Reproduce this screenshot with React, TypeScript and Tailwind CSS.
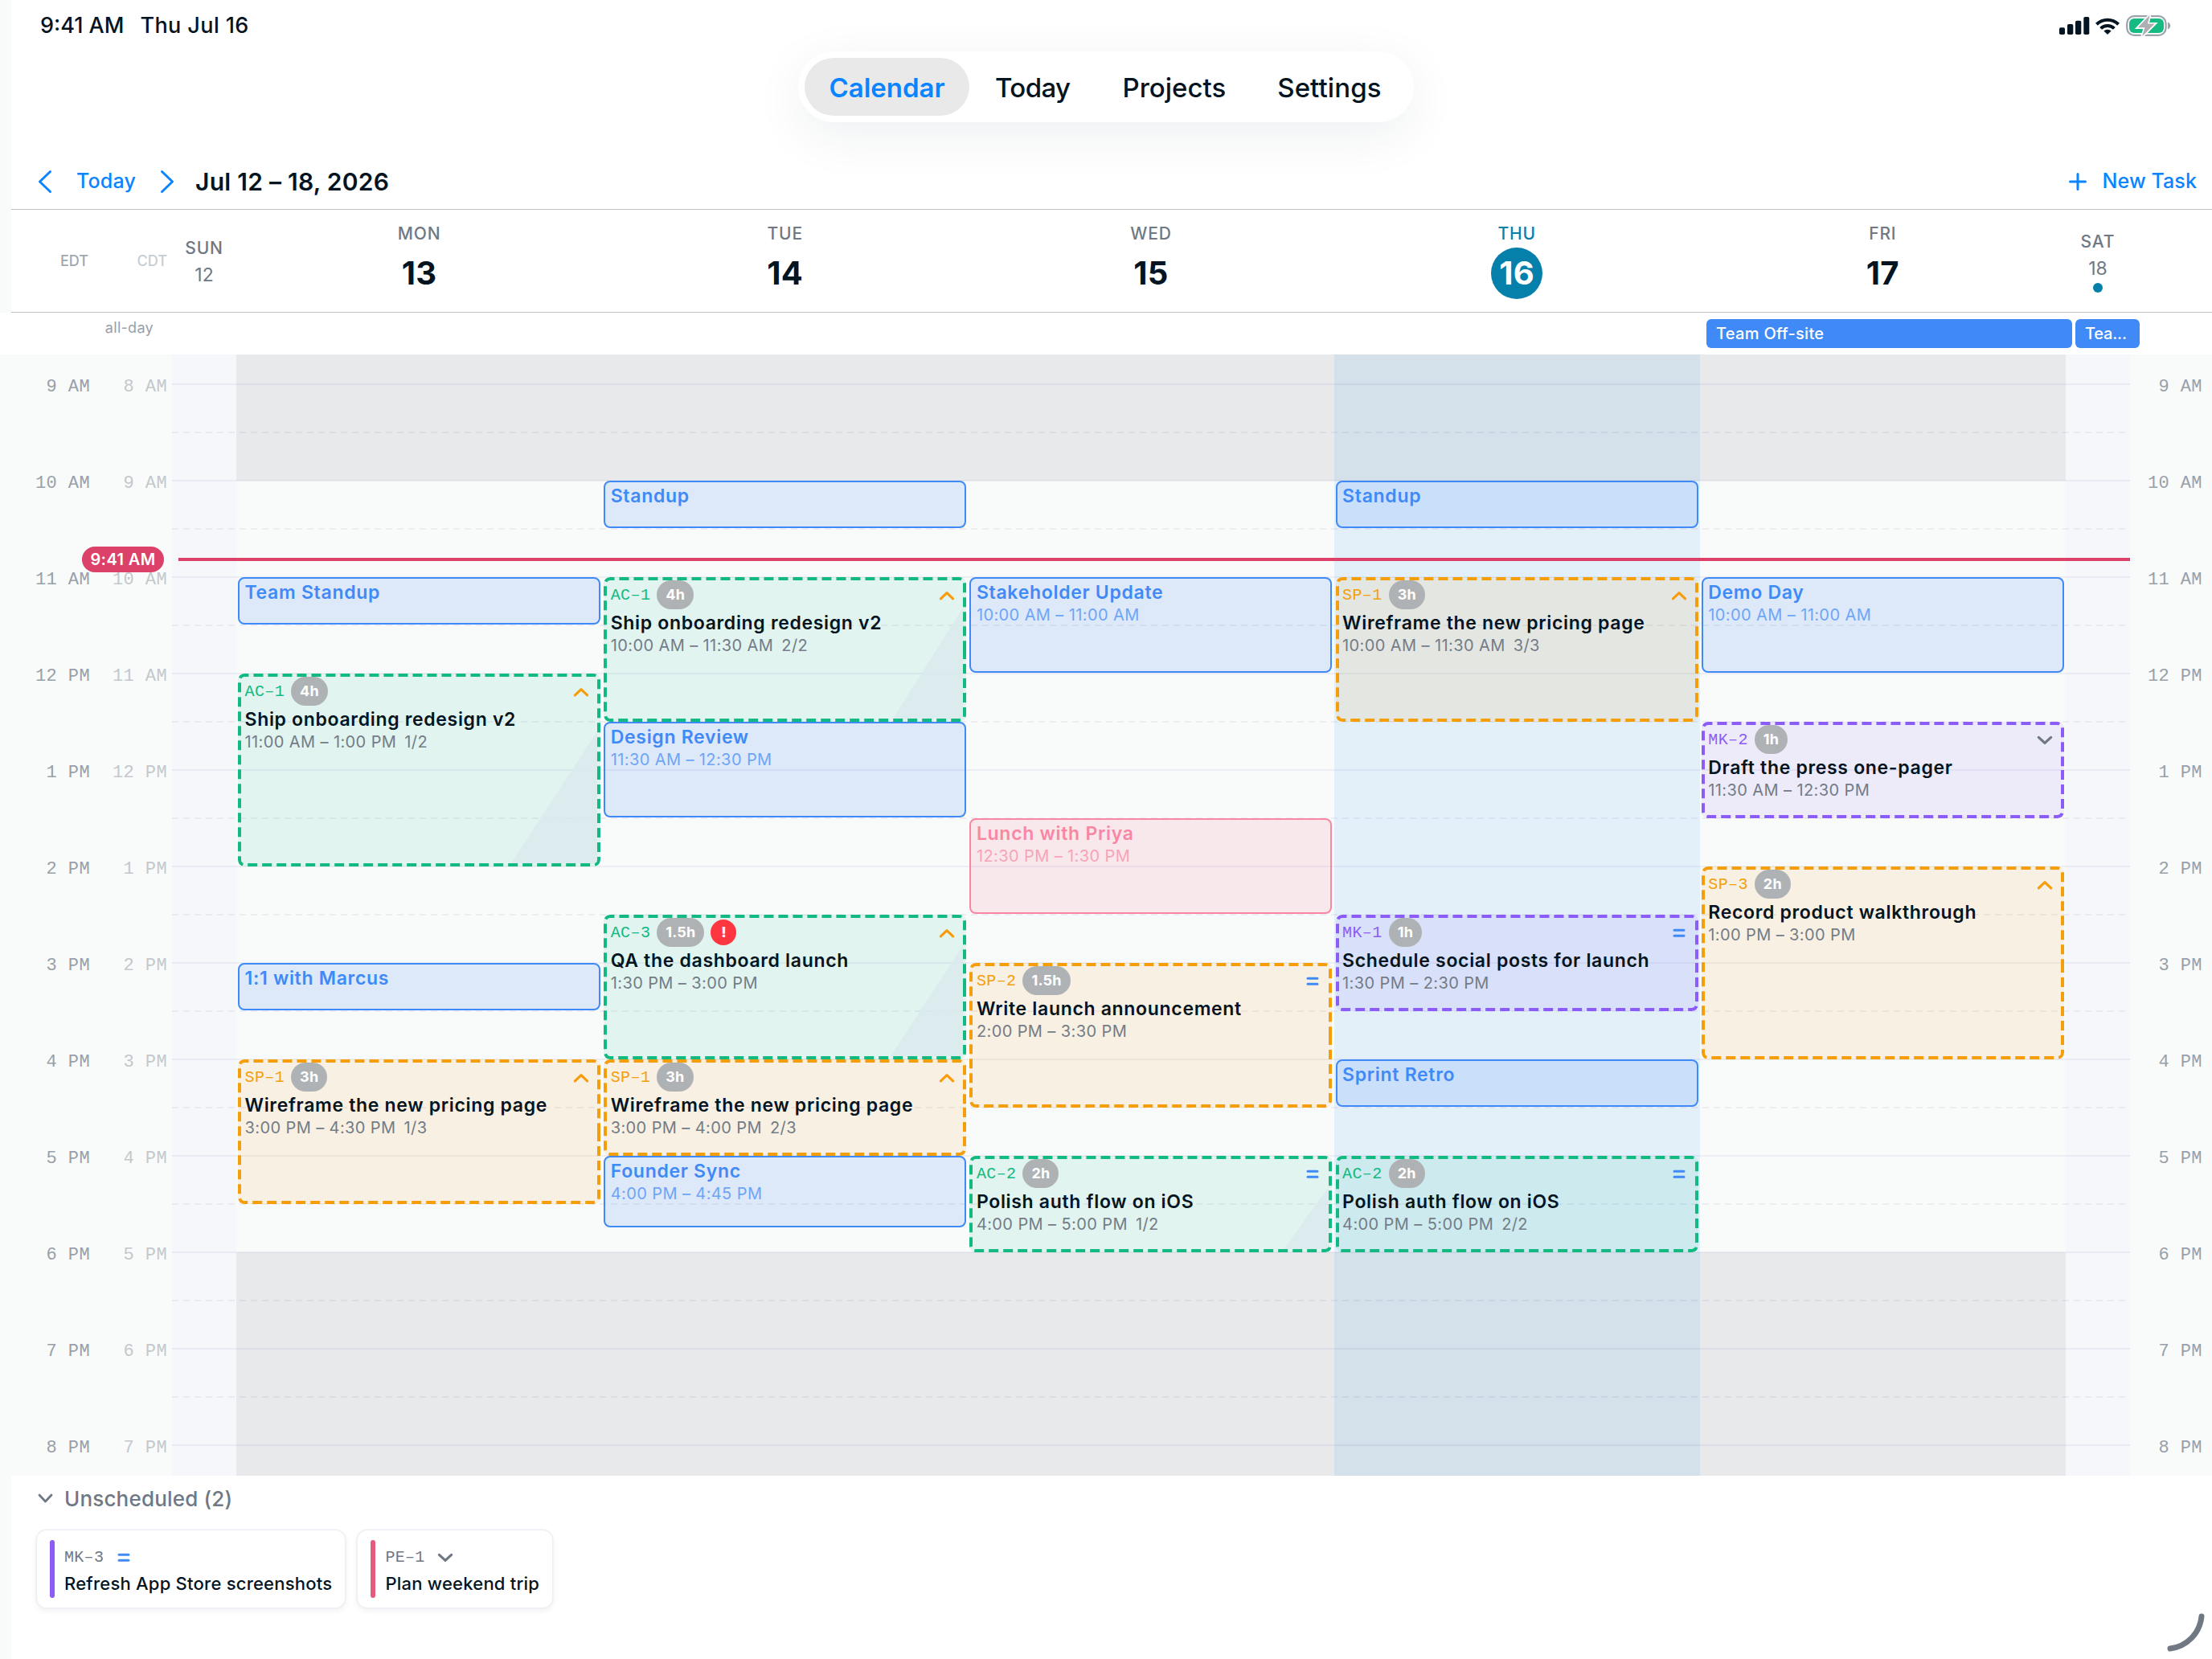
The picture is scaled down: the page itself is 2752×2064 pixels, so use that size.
import clsx from "clsx";

type Color = "blue" | "pink" | "green" | "orange" | "purple";
type Priority = "high" | "medium" | "low";

type CalendarEvent = {
  kind: "event";
  title: string;
  color: Color;
  start: number;
  end: number;
  time?: string;
};

type Task = {
  kind: "task";
  id: string;
  title: string;
  color: Color;
  start: number;
  end: number;
  time: string;
  part?: string;
  estimate: string;
  priority: Priority;
  overdue?: boolean;
  corner?: [number, number];
};

type Day = {
  name: string;
  date: number;
  today?: boolean;
  items: (CalendarEvent | Task)[];
};

const FIRST_HOUR = 9;

// start/end are hours on the EDT axis, labels are in the local zone
const days: Day[] = [
  {
    name: "MON",
    date: 13,
    items: [
      { kind: "event", title: "Team Standup", color: "blue", start: 11, end: 11.5 },
      { kind: "task", id: "AC–1", title: "Ship onboarding redesign v2", color: "green", start: 12, end: 14, time: "11:00 AM – 1:00 PM", part: "1/2", estimate: "4h", priority: "high", corner: [107, 164] },
      { kind: "event", title: "1:1 with Marcus", color: "blue", start: 15, end: 15.5 },
      { kind: "task", id: "SP–1", title: "Wireframe the new pricing page", color: "orange", start: 16, end: 17.5, time: "3:00 PM – 4:30 PM", part: "1/3", estimate: "3h", priority: "high" },
    ],
  },
  {
    name: "TUE",
    date: 14,
    items: [
      { kind: "event", title: "Standup", color: "blue", start: 10, end: 10.5 },
      { kind: "task", id: "AC–1", title: "Ship onboarding redesign v2", color: "green", start: 11, end: 12.5, time: "10:00 AM – 11:30 AM", part: "2/2", estimate: "4h", priority: "high", corner: [87, 138] },
      { kind: "event", title: "Design Review", color: "blue", start: 12.5, end: 13.5, time: "11:30 AM – 12:30 PM" },
      { kind: "task", id: "AC–3", title: "QA the dashboard launch", color: "green", start: 14.5, end: 16, time: "1:30 PM – 3:00 PM", estimate: "1.5h", priority: "high", overdue: true, corner: [90, 138] },
      { kind: "task", id: "SP–1", title: "Wireframe the new pricing page", color: "orange", start: 16, end: 17, time: "3:00 PM – 4:00 PM", part: "2/3", estimate: "3h", priority: "high" },
      { kind: "event", title: "Founder Sync", color: "blue", start: 17, end: 17.75, time: "4:00 PM – 4:45 PM" },
    ],
  },
  {
    name: "WED",
    date: 15,
    items: [
      { kind: "event", title: "Stakeholder Update", color: "blue", start: 11, end: 12, time: "10:00 AM – 11:00 AM" },
      { kind: "event", title: "Lunch with Priya", color: "pink", start: 13.5, end: 14.5, time: "12:30 PM – 1:30 PM" },
      { kind: "task", id: "SP–2", title: "Write launch announcement", color: "orange", start: 15, end: 16.5, time: "2:00 PM – 3:30 PM", estimate: "1.5h", priority: "medium" },
      { kind: "task", id: "AC–2", title: "Polish auth flow on iOS", color: "green", start: 17, end: 18, time: "4:00 PM – 5:00 PM", part: "1/2", estimate: "2h", priority: "medium", corner: [56, 78] },
    ],
  },
  {
    name: "THU",
    date: 16,
    today: true,
    items: [
      { kind: "event", title: "Standup", color: "blue", start: 10, end: 10.5 },
      { kind: "task", id: "SP–1", title: "Wireframe the new pricing page", color: "orange", start: 11, end: 12.5, time: "10:00 AM – 11:30 AM", part: "3/3", estimate: "3h", priority: "high" },
      { kind: "task", id: "MK–1", title: "Schedule social posts for launch", color: "purple", start: 14.5, end: 15.5, time: "1:30 PM – 2:30 PM", estimate: "1h", priority: "medium" },
      { kind: "event", title: "Sprint Retro", color: "blue", start: 16, end: 16.5 },
      { kind: "task", id: "AC–2", title: "Polish auth flow on iOS", color: "green", start: 17, end: 18, time: "4:00 PM – 5:00 PM", part: "2/2", estimate: "2h", priority: "medium" },
    ],
  },
  {
    name: "FRI",
    date: 17,
    items: [
      { kind: "event", title: "Demo Day", color: "blue", start: 11, end: 12, time: "10:00 AM – 11:00 AM" },
      { kind: "task", id: "MK–2", title: "Draft the press one-pager", color: "purple", start: 12.5, end: 13.5, time: "11:30 AM – 12:30 PM", estimate: "1h", priority: "low" },
      { kind: "task", id: "SP–3", title: "Record product walkthrough", color: "orange", start: 14, end: 16, time: "1:00 PM – 3:00 PM", estimate: "2h", priority: "high" },
    ],
  },
];

const edtHours = ["9 AM", "10 AM", "11 AM", "12 PM", "1 PM", "2 PM", "3 PM", "4 PM", "5 PM", "6 PM", "7 PM", "8 PM"];
const cdtHours = ["8 AM", "9 AM", "10 AM", "11 AM", "12 PM", "1 PM", "2 PM", "3 PM", "4 PM", "5 PM", "6 PM", "7 PM"];

const eventStyles: Record<Color, string> = {
  blue: "border-[#3f8af6] bg-[#3b82f6]/15 text-[#3f8af6]",
  pink: "border-[#f887a3] bg-[#f43f6e]/10 text-[#f887a3]",
  green: "",
  orange: "",
  purple: "",
};

const taskStyles: Record<Color, string> = {
  green: "bg-[#10b995]/10 text-[#12b981]",
  orange: "bg-[#f5920f]/10 text-[#f59e0b]",
  purple: "bg-[#8b5cf6]/10 text-[#8b5cf6]",
  blue: "",
  pink: "",
};

function PriorityIcon({ priority }: { priority: Priority }) {
  if (priority === "medium") {
    return (
      <svg width="20" height="14" viewBox="0 0 20 14" fill="none" stroke="#3f8af6" strokeWidth="3" strokeLinecap="round">
        <path d="M4 3.2h12M4 10.2h12" />
      </svg>
    );
  }
  return (
    <svg width="20" height="14" viewBox="0 0 20 14" fill="none" strokeWidth="3.2" strokeLinecap="round" strokeLinejoin="round" stroke={priority === "high" ? "#f99c0c" : "#6f7883"}>
      <path d={priority === "high" ? "M2.4 10.8 10 3.6l7.6 7.2" : "M2.4 3.4 10 10.4l7.6-7"} />
    </svg>
  );
}

// dashed outline that starts at the middle of the right edge
function DashedOutline({ hours }: { hours: number }) {
  const w = 451;
  const h = hours * 120;
  const d = `M${w - 2} ${h / 2}V${h - 8}a6 6 0 0 1-6 6H8a6 6 0 0 1-6-6V8a6 6 0 0 1 6-6H${w - 8}a6 6 0 0 1 6 6Z`;
  return (
    <svg className="absolute inset-0" width={w} height={h} fill="none" stroke="currentColor" strokeWidth="4" strokeDasharray="12 6">
      <path d={d} />
    </svg>
  );
}

function EventCard({ item }: { item: CalendarEvent }) {
  return (
    <div
      className={clsx("mb-px ml-[2px] w-[451px] overflow-hidden rounded-lg border-2 pt-1 pl-[6.5px] whitespace-nowrap", eventStyles[item.color])}
      style={{ gridRow: `${(item.start - FIRST_HOUR) * 4 + 1} / ${(item.end - FIRST_HOUR) * 4 + 1}` }}
    >
      <div className="text-[23px] leading-[26px] font-semibold tracking-[0.7px]">{item.title}</div>
      {item.time && <div className="mt-[3px] text-xl leading-6 tracking-[0.4px] opacity-70">{item.time}</div>}
    </div>
  );
}

function TaskCard({ item }: { item: Task }) {
  return (
    <div
      className={clsx("relative ml-[2px] w-[451px] overflow-hidden rounded-lg pt-1 pr-[14px] pl-[8.5px] whitespace-nowrap", taskStyles[item.color])}
      style={{ gridRow: `${(item.start - FIRST_HOUR) * 4 + 1} / ${(item.end - FIRST_HOUR) * 4 + 1}` }}
    >
      {item.corner && (
        <div
          className="absolute right-1 bottom-1 bg-[#dbe8ee]/80 [clip-path:polygon(100%_0,100%_100%,0_100%)]"
          style={{ width: item.corner[0], height: item.corner[1] }}
        />
      )}
      <DashedOutline hours={item.end - item.start} />
      <div className="relative flex h-9 items-center gap-2">
        <span className="mt-px font-['Liberation_Mono',monospace] text-xl leading-6 tracking-[0.4px]">{item.id}</span>
        <span className="flex h-9 items-center rounded-full bg-[#afb2b5] px-[11px] text-lg font-bold tracking-[0.2px] text-white">{item.estimate}</span>
        {item.overdue && (
          <span className="flex size-8 items-center justify-center rounded-full bg-[#fd363f] text-lg font-extrabold text-white">!</span>
        )}
        <span className="mt-px ml-auto">
          <PriorityIcon priority={item.priority} />
        </span>
      </div>
      <div className="relative mt-1 text-[23px] leading-[26px] font-semibold tracking-[0.68px] text-[#041421]">{item.title}</div>
      <div className="relative mt-[3px] flex gap-[10px] text-xl leading-6 tracking-[0.4px] text-[#737c87]">
        <span>{item.time}</span>
        {item.part && <span>{item.part}</span>}
      </div>
    </div>
  );
}

function StatusBar() {
  return (
    <div className="flex h-16 items-center pr-[51px] pl-[36px] text-[27px] font-medium">
      <span className="mt-px">9:41 AM</span>
      <span className="mt-px ml-[20px] tracking-[0.4px]">Thu Jul 16</span>
      <svg className="ml-auto" width="38" height="22" viewBox="0 0 38 22" fill="#041421">
        <rect x="0" y="13.3" width="7" height="8.7" rx="1.8" />
        <rect x="10" y="9" width="7.3" height="13" rx="1.8" />
        <rect x="20" y="4.7" width="7.3" height="17.3" rx="1.8" />
        <rect x="30.3" y="0" width="7" height="22" rx="1.8" />
      </svg>
      <svg className="ml-[7px]" width="30" height="21" viewBox="0 0 30 21" fill="none" stroke="#041421" strokeWidth="4">
        <path d="M1.4 8.2a19.4 19.4 0 0 1 27.2 0" />
        <path d="M6.6 13.4a11.9 11.9 0 0 1 16.8 0" />
        <path d="M10.4 16.6a6.6 6.6 0 0 1 9.2 0L15 21Z" fill="#041421" stroke="none" />
      </svg>
      <svg className="ml-[8px]" width="56" height="30" viewBox="0 0 56 30" fill="none">
        <rect x="1.2" y="3.2" width="48.4" height="23.6" rx="9" stroke="#9ba3ab" strokeWidth="2.2" />
        <path d="M52 10.4c2 .8 3.2 2.5 3.2 4.6s-1.2 3.8-3.2 4.6Z" fill="#9ba3ab" />
        <rect x="4" y="6" width="43" height="18" rx="6" fill="#15bb83" />
        <path d="M29.7 1.6 14.8 17.3h8.7L20 28.6l15.7-16h-8.8Z" fill="#adafb3" stroke="#fff" strokeWidth="3.4" paintOrder="stroke" />
      </svg>
    </div>
  );
}

function NavPill() {
  return (
    <div className="ml-[-14px] flex justify-center">
      <nav className="flex h-[88px] w-[766px] items-center rounded-full bg-white px-2 text-[33px] leading-10 font-medium shadow-[0_16px_64px_rgba(20,40,50,0.07)]">
        <span className="flex h-[72px] w-[205px] items-center justify-center rounded-full bg-[#e9e9ea] pt-px font-semibold text-[#0a84ff]">Calendar</span>
        <span className="mt-px ml-[32px] tracking-[-0.6px]">Today</span>
        <span className="mt-px ml-[65px]">Projects</span>
        <span className="mt-px ml-[64px] tracking-[0.1px]">Settings</span>
      </nav>
    </div>
  );
}

function Toolbar() {
  return (
    <div className="mt-[40px] flex h-[68px] items-center pr-[19px] pl-[32px] text-[25px] font-medium text-[#0a84ff]">
      <svg width="20" height="30" viewBox="0 0 20 30" fill="none" stroke="currentColor" strokeWidth="3" strokeLinecap="round" strokeLinejoin="round">
        <path d="M16.5 2.5 3.5 15l13 12.5" />
      </svg>
      <span className="ml-[29px] tracking-[0.2px]">Today</span>
      <svg className="ml-[29px]" width="20" height="30" viewBox="0 0 20 30" fill="none" stroke="currentColor" strokeWidth="3" strokeLinecap="round" strokeLinejoin="round">
        <path d="m3.5 2.5 13 12.500-13 12.500" />
      </svg>
      <span className="mt-px ml-[25px] text-[30px] font-semibold tracking-[0.25px] text-[#041421]">Jul 12 – 18, 2026</span>
      <svg className="ml-auto" width="22" height="22" viewBox="0 0 22 22" fill="none" stroke="currentColor" strokeWidth="3" strokeLinecap="round">
        <path d="M11 1.5v19M1.5 11h19" />
      </svg>
      <span className="ml-[20px] tracking-[0.1px]">New Task</span>
    </div>
  );
}

function WeekHeader() {
  return (
    <div className="grid h-[129px] grid-cols-[200px_80px_repeat(5,455.2px)_80px_102px] border-y border-[#b9c1c6] text-[#6f7883]">
      <div className="flex items-center pt-px text-right text-lg font-medium">
        <span className="w-[96px] text-[#a0a8b0]">EDT</span>
        <span className="w-[98px] text-[#c8cdd1]">CDT</span>
      </div>
      <div className="flex flex-col items-center justify-center gap-[5px] pt-px text-[21px] leading-7 font-medium">
        <span className="tracking-[0.8px]">SUN</span>
        <span className="text-[23px] font-normal">12</span>
      </div>
      {days.map((day) => (
        <div key={day.name} className="flex flex-col items-center justify-center gap-[5px]">
          <span className={clsx("relative top-px text-[21px] leading-[26px] font-medium tracking-[0.8px]", day.today && "text-[#0480aa]")}>{day.name}</span>
          <span className={clsx("flex size-16 items-center justify-center rounded-full text-[40px] font-bold tracking-[0.3px]", day.today ? "bg-[#0480aa] text-white" : "text-[#041421]")}>
            {day.date}
          </span>
        </div>
      ))}
      <div className="flex flex-col items-center justify-center pt-px text-[21px] leading-7 font-medium">
        <span className="tracking-[0.8px]">SAT</span>
        <span className="mt-[5px] text-[23px] font-normal">18</span>
        <span className="mt-1 size-3 rounded-full bg-[#0480aa]" />
      </div>
    </div>
  );
}

function AllDayRow() {
  return (
    <div className="flex h-[52px] shrink-0 pt-2 text-xl">
      <span className="w-[191px] text-right text-lg leading-[22px] tracking-[0.3px] text-[#98a1aa]">all-day</span>
      <div className="ml-[1932px] flex gap-1 font-medium tracking-[0.3px] text-white">
        <div className="h-9 w-[455px] rounded-md bg-[#3f8af6] pl-[12px] leading-[37px]">Team Off-site</div>
        <div className="h-9 w-20 rounded-md bg-[#3f8af6] pl-[12px] leading-[37px] tracking-[-0.2px]">Tea...</div>
      </div>
    </div>
  );
}

function HourLabels({ hours, className }: { hours: string[]; className: string }) {
  return (
    <div className={clsx("-mt-[19px] flex flex-col text-right font-['Liberation_Mono',monospace] text-[22px] tracking-[0.4px]", className)}>
      {hours.map((hour) => (
        <span key={hour} className="h-[120px] shrink-0 leading-[120px] whitespace-pre">{hour}</span>
      ))}
    </div>
  );
}

function GridLines() {
  return (
    <div className="absolute top-[36px] right-[102px] left-[214px]">
      {edtHours.map((hour) => (
        <div key={hour} className="h-[120px]">
          <div className="h-[2px] bg-[#5a5aa0]/8" />
          <div className="mt-[58px] h-[2px] bg-[repeating-linear-gradient(to_right,#5a5aa016_0_8px,transparent_8px_14px)]" />
        </div>
      ))}
    </div>
  );
}

function WeekGrid() {
  return (
    <div className="relative flex h-[1395px] shrink-0 overflow-hidden bg-[#f9fbfa]">
      <HourLabels hours={edtHours} className="w-[112px] text-[#98a0a9]" />
      <HourLabels hours={cdtHours} className="mr-[6px] w-[96px] text-[#c3c8cd]" />
      <div className="w-20 bg-[#f6f7fa]" />
      {days.map((day) => (
        <div key={day.name} className={clsx("flex w-[455.2px] flex-col", day.today && "bg-[#e3f0fa]")}>
          <div className={clsx("h-[157px]", day.today ? "bg-[#d4e0ea]" : "bg-[#e8e9eb]")} />
          <div className="h-[960px]" />
          <div className={clsx("flex-1", day.today ? "bg-[#d4e0ea]" : "bg-[#e8e9eb]")} />
        </div>
      ))}
      <div className="w-20 bg-[#f6f7fa]" />
      <HourLabels hours={edtHours} className="w-[90px] text-[#98a0a9]" />
      <GridLines />
      {/* events lie over the shaded columns and hour lines */}
      <div className="absolute top-[37px] left-[294px] flex">
        {days.map((day) => (
          <div key={day.name} className="grid w-[455.2px] auto-rows-[30px]">
            {day.items.map((item) =>
              item.kind === "event" ? <EventCard key={item.title} item={item} /> : <TaskCard key={item.id} item={item} />,
            )}
          </div>
        ))}
      </div>
      <div className="absolute top-[239px] right-[102px] left-[102px] flex items-center">
        <span className="flex h-8 w-[102px] items-center justify-center rounded-full bg-[#dc4169] text-xl font-semibold tracking-[0.4px] text-white">9:41 AM</span>
        <span className="ml-[18px] h-1 flex-1 bg-[#dc4169]" />
      </div>
    </div>
  );
}

function UnscheduledCard({ id, title, priority, barClass }: { id: string; title: string; priority: Priority; barClass: string }) {
  return (
    <div className="flex h-24 gap-3 rounded-xl bg-white py-3 pr-4 pl-4 shadow-[0_0_0_1.5px_#eeeef5,0_3px_8px_rgba(20,30,60,0.08)]">
      <span className={clsx("w-1.5 rounded-full", barClass)} />
      <div className="flex flex-col pt-[10px]">
        <div className="flex h-6 items-center gap-[15px] font-['Liberation_Mono',monospace] text-xl tracking-[0.3px] text-[#6f7883]">
          {id}
          <PriorityIcon priority={priority} />
        </div>
        <div className="mt-[7px] text-[22px] leading-[26px] font-medium tracking-[0.23px] whitespace-nowrap">{title}</div>
      </div>
    </div>
  );
}

export default function App() {
  return (
    <div className="relative flex h-[2064px] w-[2752px] flex-col overflow-hidden bg-white font-['Inter',sans-serif] text-[#041421]">
      <header className="shrink-0 border-l-[14px] border-[#f9fbfa]">
        <StatusBar />
        <NavPill />
        <Toolbar />
        <WeekHeader />
      </header>
      <AllDayRow />
      <WeekGrid />
      <section className="flex-1 border-l-[14px] border-[#f9fbfa] pt-[12px] pl-[32px]">
        <div className="flex h-8 items-center gap-[14px] text-[26px] font-medium text-[#6f7883]">
          <svg width="20" height="14" viewBox="0 0 20 14" fill="none" stroke="currentColor" strokeWidth="2.8" strokeLinecap="round" strokeLinejoin="round">
            <path d="m3 3 7.5 8L18 3" />
          </svg>
          <span className="tracking-[0.18px]">Unscheduled (2)</span>
        </div>
        <div className="mt-6 flex gap-4">
          <UnscheduledCard id="MK–3" title="Refresh App Store screenshots" priority="medium" barClass="bg-[#8b5cf6]" />
          <UnscheduledCard id="PE–1" title="Plan weekend trip" priority="low" barClass="bg-[#e65a7e]" />
        </div>
      </section>
      <svg className="absolute right-[8px] bottom-[8px]" width="50" height="50" viewBox="0 0 50 50" fill="none" stroke="#6f7883" strokeWidth="7" strokeLinecap="round">
        <path d="M45 5A44.5 44.5 0 0 1 6 45" />
      </svg>
    </div>
  );
}
